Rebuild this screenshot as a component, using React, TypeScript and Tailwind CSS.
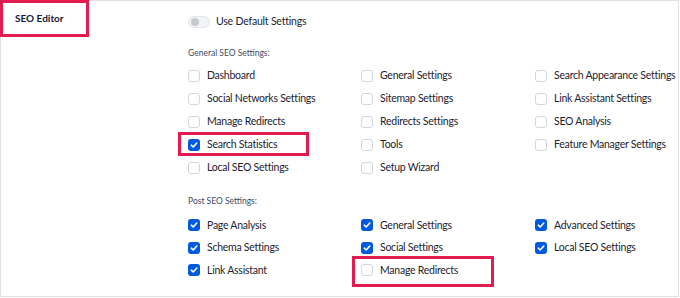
import React from 'react';

type Item = { label: string; checked?: boolean; mark?: 'a' | 'b' };

const general: Item[][] = [
  [{ label: 'Dashboard' }, { label: 'General Settings' }, { label: 'Search Appearance Settings' }],
  [{ label: 'Social Networks Settings' }, { label: 'Sitemap Settings' }, { label: 'Link Assistant Settings' }],
  [{ label: 'Manage Redirects' }, { label: 'Redirects Settings' }, { label: 'SEO Analysis' }],
  [{ label: 'Search Statistics', checked: true, mark: 'a' }, { label: 'Tools' }, { label: 'Feature Manager Settings' }],
  [{ label: 'Local SEO Settings' }, { label: 'Setup Wizard' }],
];

const post: Item[][] = [
  [{ label: 'Page Analysis', checked: true }, { label: 'General Settings', checked: true }, { label: 'Advanced Settings', checked: true }],
  [{ label: 'Schema Settings', checked: true }, { label: 'Social Settings', checked: true }, { label: 'Local SEO Settings', checked: true }],
  [{ label: 'Link Assistant', checked: true }, { label: 'Manage Redirects', mark: 'b' }],
];

const Box: React.FC<{ checked?: boolean }> = ({ checked }) =>
  checked ? (
    <span className="flex h-[12px] w-[12px] shrink-0 items-center justify-center rounded-[3px] bg-[#005ae0]">
      <svg width="8" height="8" viewBox="0 0 8 8" fill="none">
        <path d="M1.3 4.2 3.2 6 6.8 2" stroke="white" strokeWidth="1.6" strokeLinecap="round" strokeLinejoin="round" />
      </svg>
    </span>
  ) : (
    <span className="h-[12px] w-[12px] shrink-0 rounded-[3px] border border-[#d4d6dc] bg-white" />
  );

const Cell: React.FC<{ item?: Item }> = ({ item }) => {
  if (!item) return <div />;
  return (
    <div className="relative flex items-center gap-[7px]">
      <Box checked={item.checked} />
      <span className="whitespace-nowrap pt-px text-[10.5px] tracking-[-0.25px] text-[#1d2330]">{item.label}</span>
      {item.mark === 'a' && (
        <div className="absolute -left-[10px] -top-px h-[24px] w-[131px] border-[3px] border-[#e31b4f]" />
      )}
      {item.mark === 'b' && (
        <div className="absolute -left-[9px] -top-[3px] h-[31px] w-[142px] border-[3px] border-[#e31b4f]" />
      )}
    </div>
  );
};

const Grid: React.FC<{ rows: Item[][]; rowH: string }> = ({ rows, rowH }) => (
  <div className="flex flex-col">
    {rows.map((r, i) => (
      <div key={i} className={`grid grid-cols-[173px_174px_1fr] ${rowH}`}>
        <Cell item={r[0]} />
        <Cell item={r[1]} />
        <Cell item={r[2]} />
      </div>
    ))}
  </div>
);

export default function App() {
  return (
    <div className="h-[298px] w-[680px] bg-white font-['Lato',sans-serif]">
      <div className="flex h-[297px] w-[679px] border border-[#e1e1e1]">
        <div className="w-[187px] shrink-0">
          <div className="-ml-px -mt-px flex h-[37px] w-[89px] items-center border-[3px] border-[#e31b4f] pl-[12px] text-[10px] font-bold text-[#141b38]">
            SEO Editor
          </div>
        </div>
        <div className="flex-1 pt-[9px]">
          <div className="flex h-[23px] items-center gap-[6px]">
            <span className="flex h-[12px] w-[22px] items-center rounded-full border border-[#e3e4e8] bg-[#f3f4f5] pl-[2px]">
              <span className="h-[8px] w-[8px] rounded-full bg-[#c7c9cf]" />
            </span>
            <span className="pt-px text-[10.5px] tracking-[-0.2px] text-[#1d2330]">Use Default Settings</span>
          </div>
          <div className="mt-[13px] flex h-[14px] items-center text-[8.5px] text-[#434960]">General SEO Settings:</div>
          <div className="mt-[4px]">
            <Grid rows={general} rowH="h-[23px]" />
          </div>
          <div className="mt-[15px] flex h-[14px] items-center text-[8.5px] text-[#434960]">Post SEO Settings:</div>
          <div className="mt-[6px]">
            <Grid rows={post} rowH="h-[22.5px]" />
          </div>
        </div>
      </div>
    </div>
  );
}
